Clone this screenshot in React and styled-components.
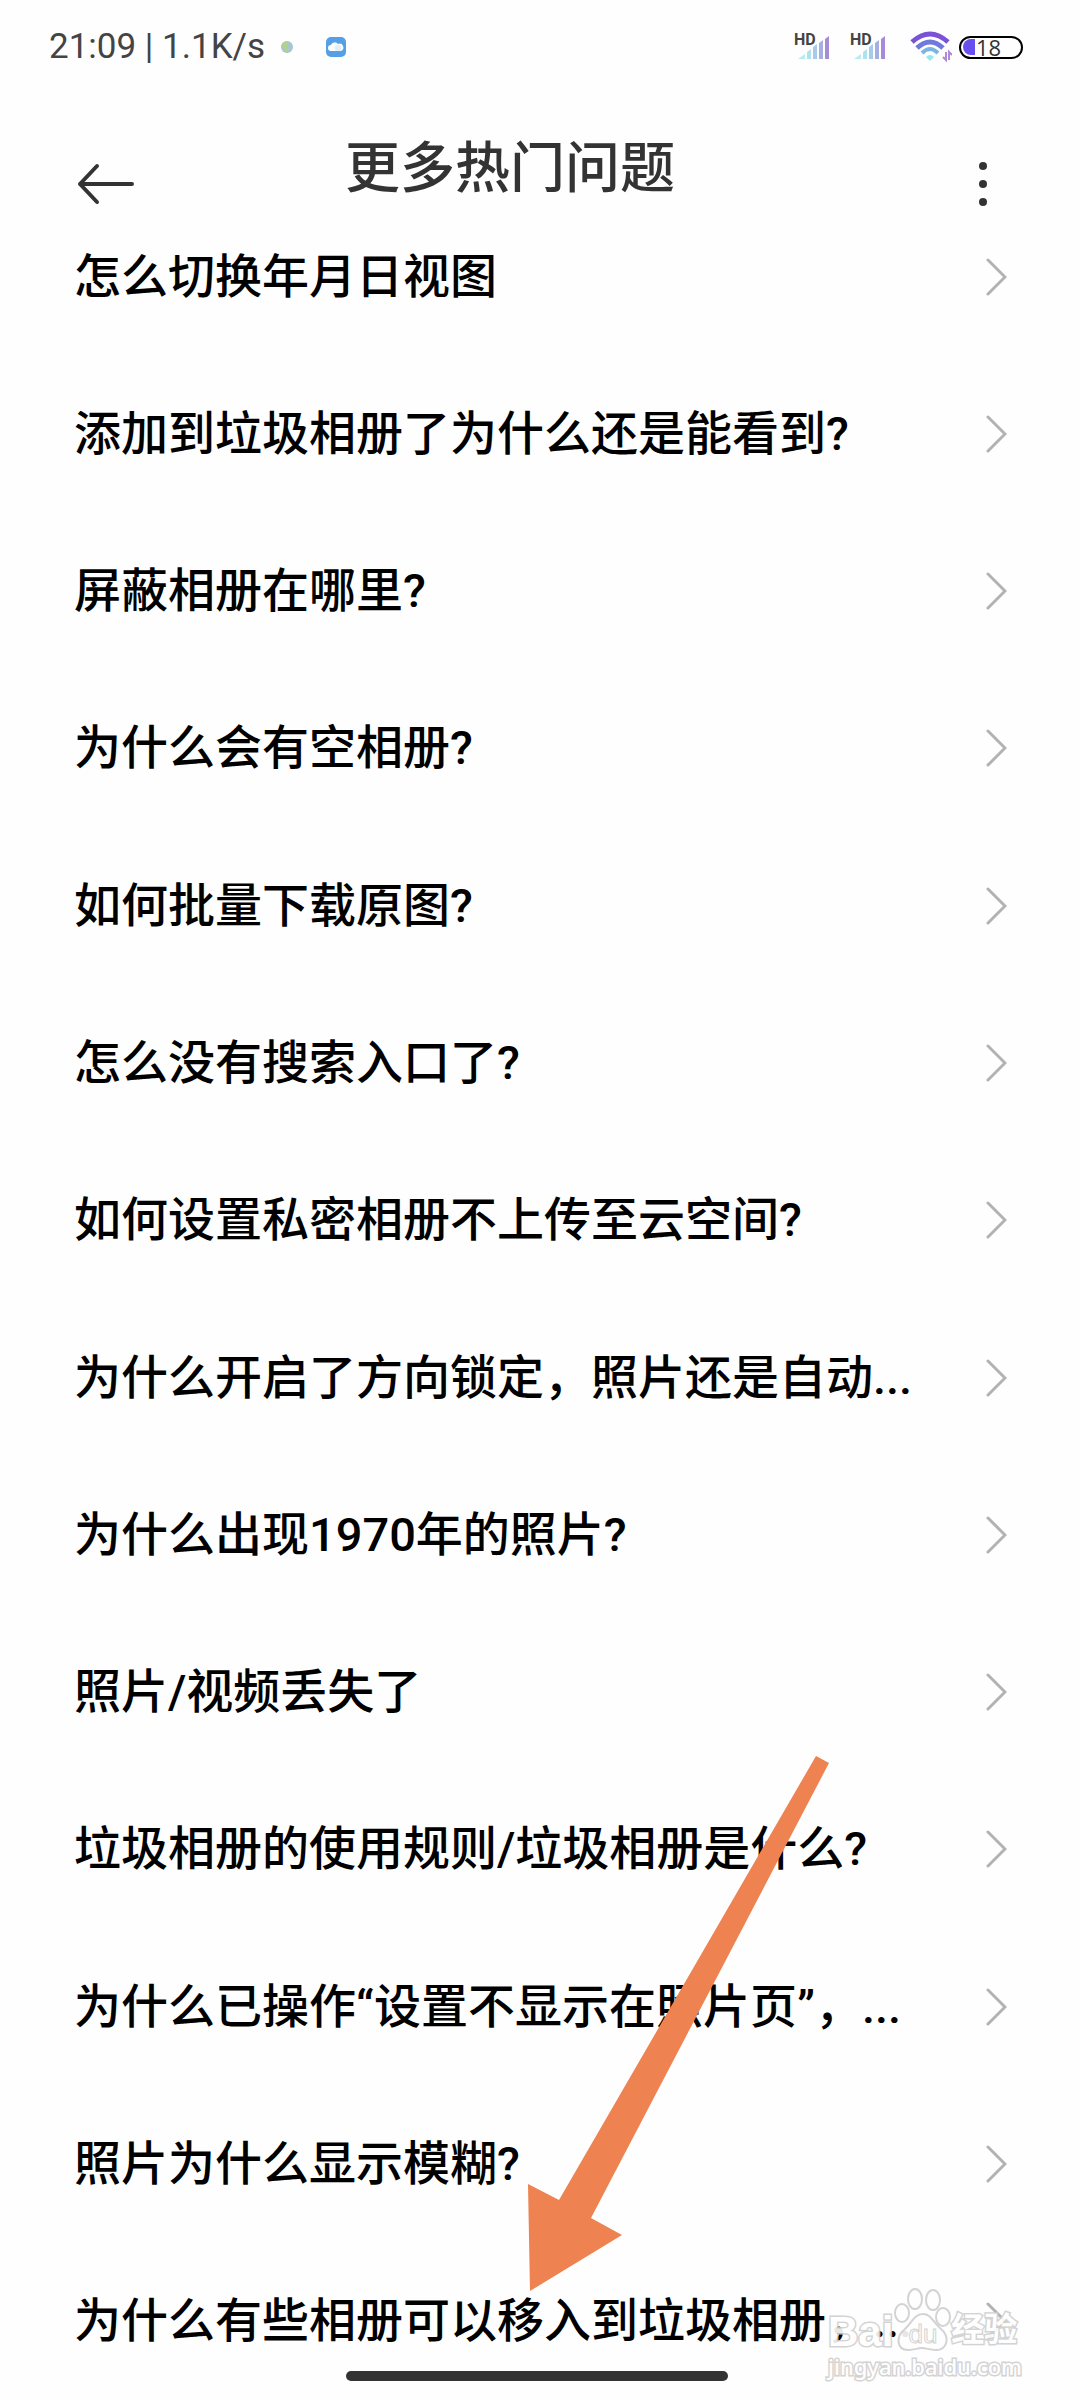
import React from "react";
import styled, { createGlobalStyle } from "styled-components";

const GlobalStyle = createGlobalStyle`
  * {
    box-sizing: border-box;
  }
  body {
    margin: 0;
    background: #fefefe;
    color: #000;
    font-family: Roboto, "Noto Sans CJK SC", sans-serif;
  }
`;

const Page = styled.div`
  position: relative;
  display: flex;
  flex-direction: column;
  min-height: 100vh;
`;

const StatusBar = styled.div`
  display: flex;
  align-items: center;
  justify-content: space-between;
  height: 94px;
  padding: 0 57px 0 49px;
`;

const StatusGroup = styled.div`
  display: flex;
  align-items: center;
  gap: ${(props) => props.$gap}px;
`;

const StatusText = styled.span`
  font-size: 35px;
  line-height: 40px;
  color: #444;
  white-space: pre;
`;

const Signal = styled.span`
  position: relative;
  display: block;
  width: 36px;
  height: 30px;
  svg {
    display: block;
  }
`;

const SignalLabel = styled.span`
  position: absolute;
  top: 0;
  left: 0;
  font-size: 16px;
  font-weight: 700;
  line-height: 16px;
  color: #444;
`;

const Battery = styled.span`
  display: flex;
  align-items: center;
  width: 64px;
  height: 23px;
  padding: 0 2px;
  border: 2px solid #000;
  border-radius: 12px;
  font-family: "Open Sans", sans-serif;
  font-size: 22px;
  line-height: 18px;
  color: #333;
  &::before {
    content: "";
    width: 12px;
    height: 16px;
    margin-right: 1px;
    border-radius: 8px 0 0 8px;
    background: #6a4ff0;
  }
`;

const Header = styled.header`
  display: flex;
  justify-content: space-between;
  height: 104px;
  padding: 0 63px 0 72px;
`;

const IconButton = styled.button`
  display: flex;
  align-items: center;
  justify-content: center;
  width: 68px;
  height: 68px;
  margin-top: 56px;
  padding: 0;
  border: 0;
  background: none;
`;

const Title = styled.h1`
  flex: 1;
  margin: 0;
  padding-top: 42px;
  padding-right: 69px;
  font-size: 55px;
  font-weight: 500;
  line-height: 64px;
  text-align: center;
  color: #333;
`;

const List = styled.ul`
  display: flex;
  flex: 1;
  flex-direction: column;
  margin: 0;
  padding: 0;
  list-style: none;
`;

const Item = styled.li`
  display: flex;
  flex: 1;
`;

const Question = styled.a`
  display: flex;
  flex: 1;
  align-items: center;
  justify-content: space-between;
  padding: 0 73px 0 74px;
  font-size: 47px;
  font-weight: 500;
  line-height: 64px;
  color: #000;
  text-decoration: none;
  white-space: nowrap;
`;

const Pointer = styled.svg`
  position: absolute;
  top: 1756px;
  left: 528px;
  pointer-events: none;
`;

const HomeBar = styled.div`
  position: absolute;
  bottom: 19px;
  left: 50%;
  width: 382px;
  height: 10px;
  margin-left: -194px;
  border-radius: 5px;
  background: #333;
`;

const Watermark = styled.div`
  position: absolute;
  right: 58px;
  bottom: 20px;
  width: 194px;
  color: #fff;
  opacity: 0.9;
  pointer-events: none;
`;

const WatermarkRow = styled.div`
  display: flex;
  align-items: flex-end;
`;

const WatermarkText = styled.span`
  font-family: "Liberation Sans", "Noto Sans CJK SC", sans-serif;
  font-size: ${(props) => props.$size}px;
  font-weight: 700;
  line-height: ${(props) => props.$line}px;
  paint-order: stroke fill;
  -webkit-text-stroke: 3px #cfcfcf;
`;

const WatermarkUrl = styled(WatermarkText)`
  display: block;
  font-family: "Noto Sans", sans-serif;
  font-weight: 500;
`;

const questions = [
  "怎么切换年月日视图",
  "添加到垃圾相册了为什么还是能看到?",
  "屏蔽相册在哪里?",
  "为什么会有空相册?",
  "如何批量下载原图?",
  "怎么没有搜索入口了?",
  "如何设置私密相册不上传至云空间?",
  "为什么开启了方向锁定，照片还是自动...",
  "为什么出现1970年的照片?",
  "照片/视频丢失了",
  "垃圾相册的使用规则/垃圾相册是什么?",
  "为什么已操作“设置不显示在照片页”，...",
  "照片为什么显示模糊?",
  "为什么有些相册可以移入到垃圾相册，...",
];

function SignalIcon() {
  return (
    <Signal>
      <SignalLabel>HD</SignalLabel>
      <svg width="36" height="30" viewBox="0 0 36 30">
        <path d="M4 27 L11 22 V27 Z" fill="#b5eef0" />
        <path d="M13 20 L17 17 V27 H13 Z" fill="#aee3ee" />
        <path d="M19 15 L23 12 V27 H19 Z" fill="#a9cbea" />
        <path d="M25 11 L29 8 V27 H25 Z" fill="#a5afe2" />
        <path d="M31 7 L35 4 V27 H31 Z" fill="#a58bd8" />
      </svg>
    </Signal>
  );
}

function WifiIcon() {
  return (
    <svg width="42" height="32" viewBox="0 0 42 32" fill="none">
      <path d="M2 11 Q20 -5 38 11" stroke="#7a52d6" strokeWidth="5" />
      <path d="M7 17 Q20 5 33 17" stroke="#7079dc" strokeWidth="5" />
      <path d="M12 22 Q20 14 28 22" stroke="#78b4e4" strokeWidth="4" />
      <path d="M16 26 Q20 22 24 26 L20 30 Z" fill="#93e9ec" />
      <path d="M36 21 V29 L33 26 M39 29 V21 L42 24" stroke="#b08ad8" strokeWidth="2" />
    </svg>
  );
}

function GlobeIcon() {
  return (
    <svg width="12" height="12" viewBox="0 0 12 12">
      <circle cx="6" cy="6" r="6" fill="#a4c6d8" />
      <path d="M1 3 Q4 -1 8 1 L7 4 L5 6 L8 8 L7 12 Q4 11 3 8 L0 6 Z" fill="#b3d08e" />
    </svg>
  );
}

function CloudIcon() {
  return (
    <svg width="20" height="20" viewBox="0 0 20 20">
      <rect width="20" height="20" rx="5" fill="#559fe6" />
      <path
        d="M5 14 A3 3 0 0 1 5 8 A4 4 0 0 1 12 7 A3.5 3.5 0 0 1 15 14 Z"
        fill="#fff"
      />
      <path d="M10 14 A3.5 3.5 0 1 1 14 14 Z" fill="#dff0fc" />
    </svg>
  );
}

function Chevron() {
  return (
    <svg width="21" height="38" viewBox="0 0 21 38" fill="none">
      <path
        d="M2 2 L19 19 L2 36"
        stroke="#b2b2b2"
        strokeWidth="3"
        strokeLinecap="round"
      />
    </svg>
  );
}

function Paw() {
  return (
    <svg width="58" height="64" viewBox="0 0 58 64">
      <g fill="#fff" stroke="#cfcfcf" strokeWidth="2">
        <ellipse cx="9" cy="25" rx="7" ry="9" />
        <ellipse cx="22" cy="11" rx="7" ry="10" />
        <ellipse cx="40" cy="12" rx="7" ry="10" />
        <ellipse cx="50" cy="29" rx="7" ry="9" />
        <path d="M30 26 C38 26 40 34 47 40 C58 49 54 62 43 62 C36 62 34 60 29 60 C24 60 22 62 15 62 C4 62 2 49 12 41 C19 35 21 26 30 26 Z" />
      </g>
      <text
        x="30"
        y="55"
        textAnchor="middle"
        fontFamily="Liberation Sans, sans-serif"
        fontSize="26"
        fill="#fff"
        stroke="#cfcfcf"
        strokeWidth="1"
      >
        du
      </text>
    </svg>
  );
}

export default function App() {
  return (
    <Page>
      <GlobalStyle />
      <StatusBar>
        <StatusGroup $gap={16}>
          <StatusText>21:09 | 1.1K/s</StatusText>
          <StatusGroup $gap={33}>
            <GlobeIcon />
            <CloudIcon />
          </StatusGroup>
        </StatusGroup>
        <StatusGroup $gap={24}>
          <StatusGroup $gap={20}>
            <SignalIcon />
            <SignalIcon />
          </StatusGroup>
          <StatusGroup $gap={7}>
            <WifiIcon />
            <Battery>18</Battery>
          </StatusGroup>
        </StatusGroup>
      </StatusBar>

      <Header>
        <IconButton aria-label="返回">
          <svg width="58" height="42" viewBox="0 0 58 42" fill="none">
            <path
              d="M20 3 L3 21 L20 39 M3 21 H55"
              stroke="#333"
              strokeWidth="4"
              strokeLinecap="round"
              strokeLinejoin="round"
            />
          </svg>
        </IconButton>
        <Title>更多热门问题</Title>
        <IconButton aria-label="更多">
          <svg width="8" height="44" viewBox="0 0 8 44" fill="#333">
            <circle cx="4" cy="4" r="4" />
            <circle cx="4" cy="22" r="4" />
            <circle cx="4" cy="40" r="4" />
          </svg>
        </IconButton>
      </Header>

      <List>
        {questions.map((question) => (
          <Item key={question}>
            <Question href="#">
              {question}
              <Chevron />
            </Question>
          </Item>
        ))}
      </List>

      <Pointer width="302" height="536" viewBox="0 0 302 536" aria-hidden="true">
        <path
          d="M288 0 L301 7 L63 462 L94 479 L2 535 L0 428 L31 444 Z"
          fill="#ee8250"
        />
      </Pointer>

      <Watermark>
        <WatermarkRow>
          <WatermarkText $size={42} $line={40}>Bai</WatermarkText>
          <Paw />
          <WatermarkText $size={33} $line={44}>经验</WatermarkText>
        </WatermarkRow>
        <WatermarkUrl $size={22} $line={28}>jingyan.baidu.com</WatermarkUrl>
      </Watermark>
      <HomeBar />
    </Page>
  );
}
